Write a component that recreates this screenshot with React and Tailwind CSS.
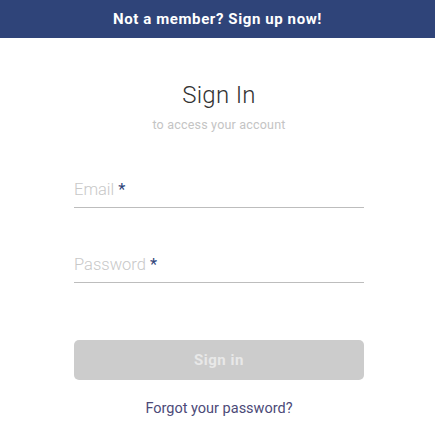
export default function App() {
  return (
    <div className="min-h-[447px] bg-white font-['Roboto',sans-serif]">
      {/* top banner */}
      <div className="h-[38px] bg-[#2f4479] flex items-center justify-center">
        <p className="text-white text-[15px] font-bold tracking-[0.6px]">
          Not a member? <a href="#">Sign up now!</a>
        </p>
      </div>

      <div className="w-[290px] ml-[74px]">
        <div className="pt-[42px] text-center">
          <h1 className="text-[24px] font-light text-[#333] leading-[30px] tracking-[0.3px]">Sign In</h1>
          <p className="mt-[8px] text-[12.5px] text-[#c4c4c4] leading-[14px] tracking-[0.2px]">to access your account</p>
        </div>

        <form className="mt-[46px]">
          <div className="border-b border-[#bdbdbd] pb-[5px]">
            <label className="text-[16.5px] font-light text-[#c8c8c8] leading-[19px]">
              Email <span className="text-[#2f4479] font-normal">*</span>
            </label>
          </div>
          <div className="mt-[45px] border-b border-[#bdbdbd] pb-[5px]">
            <label className="text-[16.5px] font-light text-[#c8c8c8] leading-[19px]">
              Password <span className="text-[#2f4479] font-normal">*</span>
            </label>
          </div>

          <button
            type="button"
            className="mt-[57px] w-full h-[40px] rounded-[5px] bg-[#cccccc] text-[#e8e8e8] text-[15px] font-bold tracking-[0.5px]"
          >
            Sign in
          </button>

          <p className="mt-[18px] text-center text-[14.5px] text-[#4c4a78]">
            <a href="#">Forgot your password?</a>
          </p>
        </form>
      </div>
    </div>
  );
}
